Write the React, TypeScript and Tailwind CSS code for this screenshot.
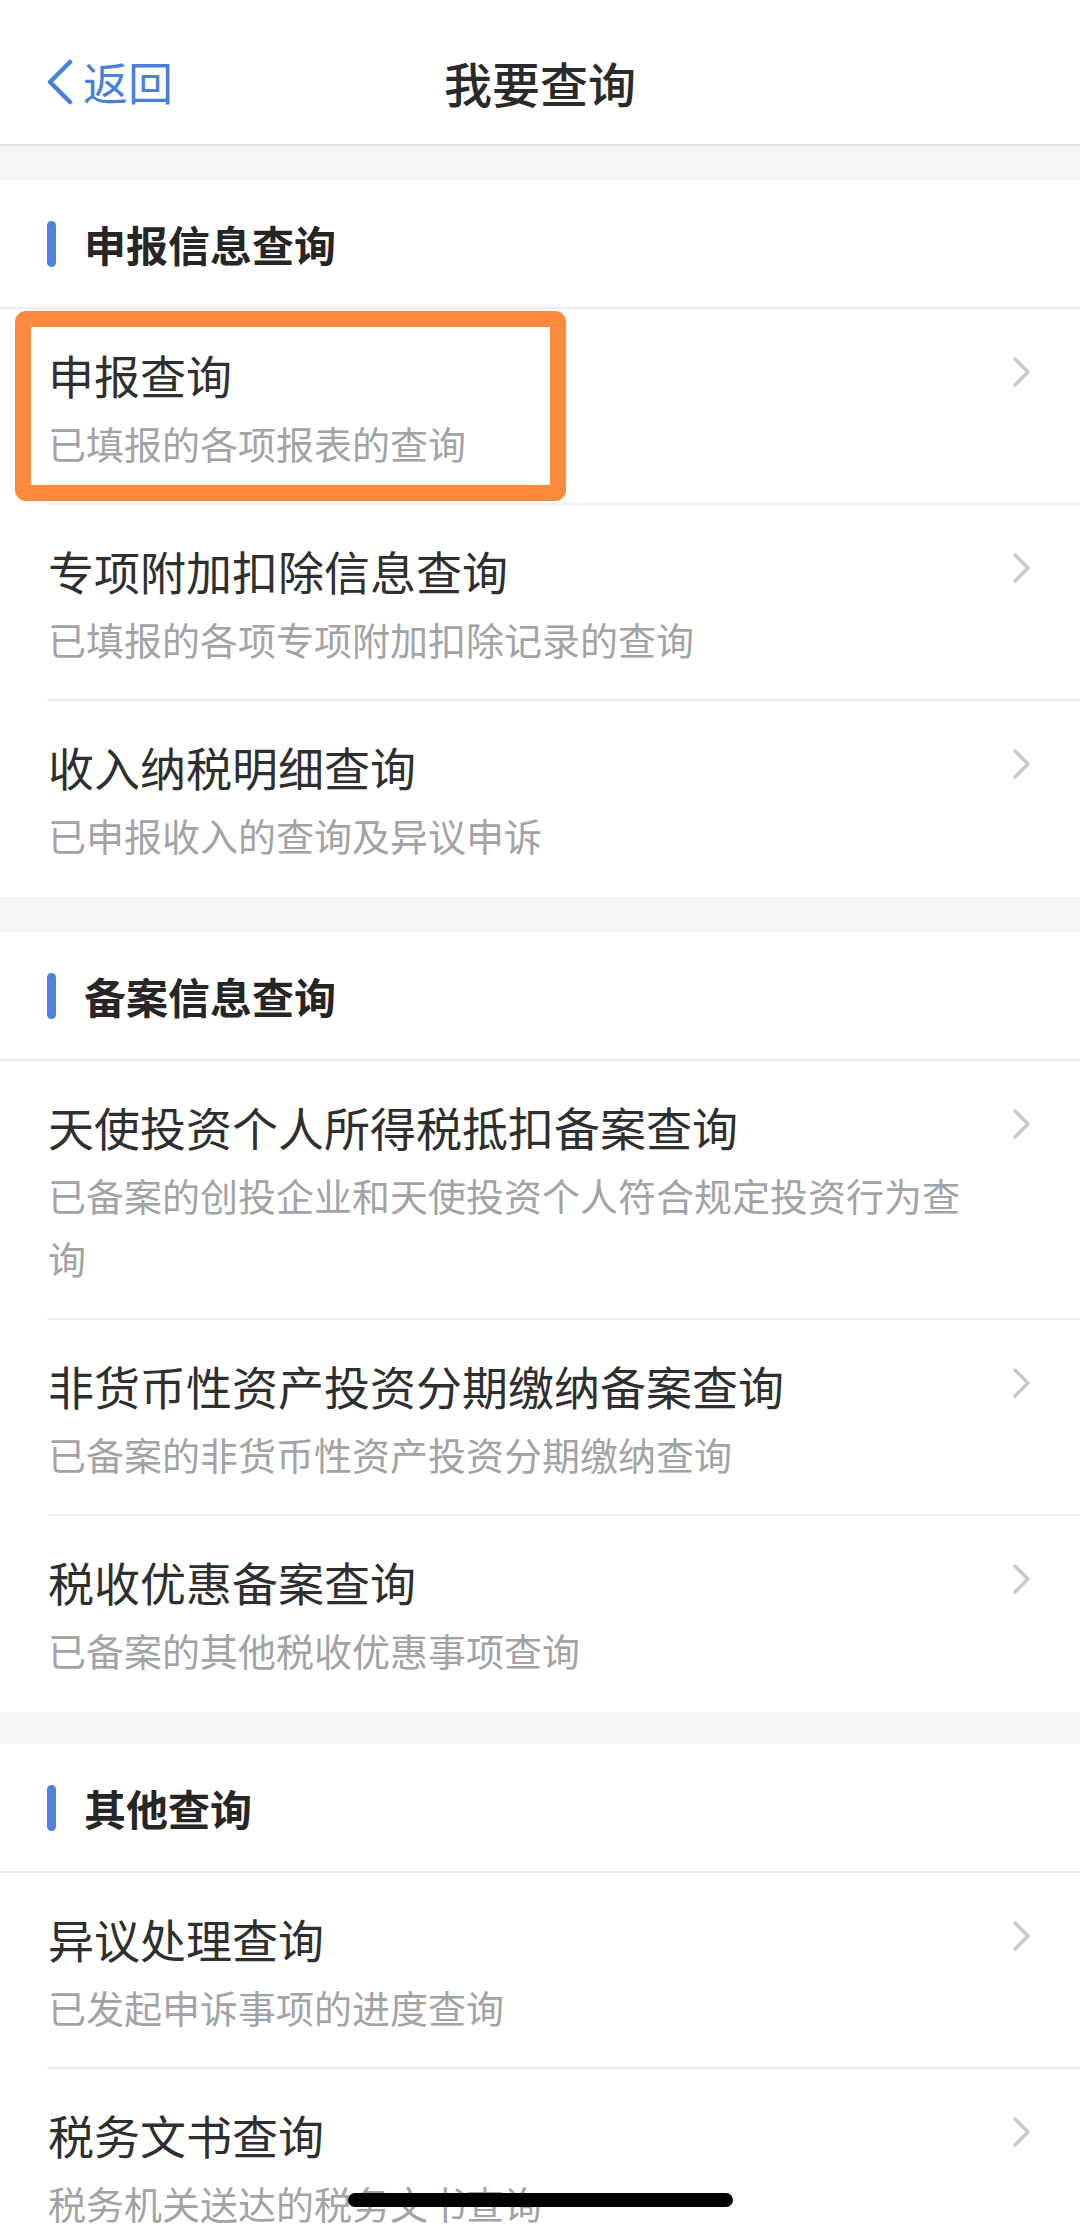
import React from "react";

type Item = { title: string; sub: string };
type Section = { header: string; band: string; items: Item[] };

const sections: Section[] = [
  {
    header: "申报信息查询",
    band: "h-[34px]",
    items: [
      { title: "申报查询", sub: "已填报的各项报表的查询" },
      { title: "专项附加扣除信息查询", sub: "已填报的各项专项附加扣除记录的查询" },
      { title: "收入纳税明细查询", sub: "已申报收入的查询及异议申诉" },
    ],
  },
  {
    header: "备案信息查询",
    band: "h-[35px]",
    items: [
      {
        title: "天使投资个人所得税抵扣备案查询",
        sub: "已备案的创投企业和天使投资个人符合规定投资行为查询",
      },
      { title: "非货币性资产投资分期缴纳备案查询", sub: "已备案的非货币性资产投资分期缴纳查询" },
      { title: "税收优惠备案查询", sub: "已备案的其他税收优惠事项查询" },
    ],
  },
  {
    header: "其他查询",
    band: "h-[32px]",
    items: [
      { title: "异议处理查询", sub: "已发起申诉事项的进度查询" },
      { title: "税务文书查询", sub: "税务机关送达的税务文书查询" },
    ],
  },
];

function Chevron() {
  return (
    <svg width="22" height="30" viewBox="0 0 22 30" fill="none" className="shrink-0 mt-[48px]">
      <path d="M4 2 L17 15 L4 28" stroke="#c9c9cc" strokeWidth="3.5" strokeLinecap="round" strokeLinejoin="round" />
    </svg>
  );
}

function Row({ item, last, highlight }: { item: Item; last: boolean; highlight: boolean }) {
  return (
    <div className="relative">
      <div className="flex items-start pl-[48px] pr-[47px]">
        <div className={"flex-1 pt-[35px] pr-[30px] " + (last ? "pb-[31px]" : "pb-[29px]")}>
          <div className="text-[46px] leading-[60px] text-[#2f2f2f]">{item.title}</div>
          <div className="mt-[7px] text-[38px] leading-[63px] text-[#a3a3a6]">{item.sub}</div>
        </div>
        <Chevron />
      </div>
      {!last && <div className="ml-[47px] h-[2px] bg-[#efeff1]" />}
      {highlight && (
        <div className="absolute left-[15px] top-[2px] w-[551px] h-[190px] border-[16px] border-[#fe8b3c] rounded-[11px]" />
      )}
    </div>
  );
}

export default function App() {
  return (
    <div className="relative w-[1080px] h-[2229px] overflow-hidden bg-white font-['Noto_Sans_CJK_SC',sans-serif]">
      <div className="relative h-[146px] pt-[20px] flex items-center border-b-[2px] border-[#e5e5e8]">
        <div className="flex items-center pl-[46px]">
          <svg width="28" height="46" viewBox="0 0 28 46" fill="none">
            <path d="M24 3 L4 23 L24 43" stroke="#4a7fdb" strokeWidth="4.5" strokeLinecap="round" strokeLinejoin="round" />
          </svg>
          <span className="ml-[9px] text-[45px] leading-[60px] text-[#4a7fdb]">返回</span>
        </div>
        <div className="absolute left-0 right-0 top-[20px] bottom-0 flex items-center justify-center pointer-events-none">
          <span className="text-[48px] leading-[60px] font-medium text-[#2a2a2a]">我要查询</span>
        </div>
      </div>
      {sections.map((s, si) => (
        <div key={si}>
          <div className={s.band + " bg-[#f4f5f8]"} />
          <div className="h-[129px] flex items-center pl-[47px] border-b-[2px] border-[#ededef]">
            <div className="w-[9px] h-[46px] rounded-full bg-[#4e80e6]" />
            <span className="ml-[28px] text-[42px] leading-[56px] font-bold text-[#262626]">{s.header}</span>
          </div>
          {s.items.map((it, ii) => (
            <Row key={ii} item={it} last={ii === s.items.length - 1} highlight={si === 0 && ii === 0} />
          ))}
        </div>
      ))}
      <div className="absolute left-[348px] top-[2193px] w-[385px] h-[14px] rounded-full bg-black" />
    </div>
  );
}
